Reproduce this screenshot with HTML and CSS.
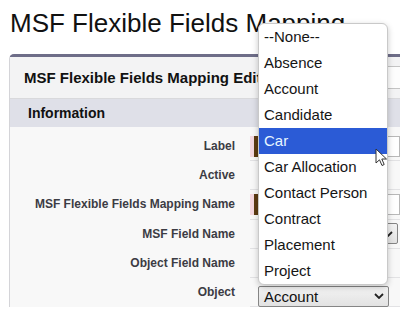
FILE: index.html
```html
<!DOCTYPE html>
<html>
<head>
<meta charset="utf-8">
<link rel="stylesheet" href="styles.css">
</head>
<body>
<h1 class="title">MSF Flexible Fields Mapping</h1>
<div class="panel">
  <div class="panel-head">
    <h2 class="panel-title">MSF Flexible Fields Mapping Edit</h2>
    <button class="btn" aria-label="Save"></button>
  </div>
  <div class="section">Information</div>
  <div class="rows">
    <div class="lbl">Label</div>
    <div class="val"><span class="req"></span><span class="inp"></span></div>
    <div class="lbl">Active</div>
    <div class="val"></div>
    <div class="lbl">MSF Flexible Fields Mapping Name</div>
    <div class="val"><span class="req"></span><span class="inp"></span></div>
    <div class="lbl">MSF Field Name</div>
    <div class="val"><span class="sel sel-wide"><span class="sel-text"></span><svg class="chev" width="10" height="6" viewBox="0 0 10 6"><polyline points="1,1 5,5 9,1" fill="none" stroke="#222" stroke-width="1.8"/></svg></span></div>
    <div class="lbl">Object Field Name</div>
    <div class="val"></div>
    <div class="lbl">Object</div>
    <div class="val"><span class="sel sel-obj"><span class="sel-text">Account</span><svg class="chev" width="10" height="6" viewBox="0 0 10 6"><polyline points="1,1 5,5 9,1" fill="none" stroke="#222" stroke-width="1.8"/></svg></span></div>
  </div>
</div>
<ul class="dropdown">
  <li>--None--</li>
  <li>Absence</li>
  <li>Account</li>
  <li>Candidate</li>
  <li class="hl">Car</li>
  <li>Car Allocation</li>
  <li>Contact Person</li>
  <li>Contract</li>
  <li>Placement</li>
  <li>Project</li>
</ul>
<svg class="cursor" width="13" height="19" viewBox="0 0 13 19">
  <path d="M1,1 L1,15 L4.5,11.8 L7,17.5 L9.2,16.5 L6.8,11 L11.5,11 Z" fill="#fff" stroke="#333" stroke-width="1" stroke-linejoin="round"/>
</svg>
</body>
</html>
```

FILE: styles.css
```css
html, body {
  margin: 0;
  padding: 0;
}
body {
  width: 400px;
  height: 315px;
  overflow: hidden;
  position: relative;
  background: #ffffff;
  font-family: "Liberation Sans", Arial, sans-serif;
}
.title {
  margin: 8px 0 0 10px;
  font-size: 26px;
  font-weight: normal;
  line-height: 30px;
  color: #111;
  white-space: nowrap;
}
.panel {
  margin: 16px 0 0 9px;
  width: 420px;
  border-top: 3px solid #6e6d88;
  border-left: 1px solid #d4d4d8;
  border-top-left-radius: 5px;
  background: #f8f8f8;
}
.panel-head {
  display: flex;
  align-items: center;
  height: 41px;
  border-bottom: 1px solid #d9d9dc;
  background: #f3f3f4;
}
.panel-title {
  flex: 0 0 369px;
  margin: 0;
  padding-left: 14px;
  box-sizing: border-box;
  font-size: 15px;
  font-weight: bold;
  color: #111;
  white-space: nowrap;
  overflow: hidden;
}
.btn {
  height: 23px;
  width: 60px;
  border: 1px solid #c4c4c4;
  border-radius: 4px;
  background: #fdfdfd;
}
.section {
  height: 28px;
  line-height: 28px;
  padding-left: 18px;
  background: #dfe0e8;
  font-size: 14px;
  font-weight: bold;
  color: #111;
}
.rows {
  display: grid;
  grid-template-columns: 225px 1fr;
  column-gap: 15px;
  grid-auto-rows: 29.2px;
  padding-top: 5px;
}
.lbl {
  text-align: right;
  font-size: 12px;
  font-weight: bold;
  line-height: 29px;
  color: #3c3c44;
  white-space: nowrap;
}
.val {
  display: flex;
  align-items: center;
  border-bottom: 1px solid #e2e2e4;
}
.req {
  width: 4px;
  height: 21px;
  border-left: 4px solid #f4d8df;
  background: #5c3b12;
}
.inp {
  width: 140px;
  height: 19px;
  border: 1px solid #b8b8b8;
  background: #fff;
}
.sel {
  display: flex;
  align-items: center;
  justify-content: space-between;
  box-sizing: border-box;
  margin-left: 8px;
  height: 21px;
  border: 1px solid #858585;
  border-radius: 2px;
  background: linear-gradient(#f3f3f3, #e2e2e2);
  padding: 0 4px 0 5px;
  font-size: 15px;
  color: #111;
}
.sel-wide {
  width: 140px;
}
.sel-obj {
  width: 131px;
  align-self: flex-start;
  margin-top: 8px;
}
.chev {
  display: block;
}
.dropdown {
  position: absolute;
  left: 258px;
  top: 23px;
  width: 130px;
  margin: 0;
  padding: 0;
  list-style: none;
  box-sizing: border-box;
  border: 1px solid #c9c9c9;
  border-radius: 6px;
  background: #fff;
  box-shadow: 0 2px 6px rgba(0, 0, 0, 0.22);
  overflow: hidden;
}
.dropdown li {
  height: 26px;
  line-height: 26px;
  padding-left: 5px;
  font-size: 15px;
  color: #151515;
  white-space: nowrap;
}
.dropdown li.hl {
  background: #2b5bd6;
  color: #e8f6ff;
}
.cursor {
  position: absolute;
  left: 375px;
  top: 148px;
}
```
